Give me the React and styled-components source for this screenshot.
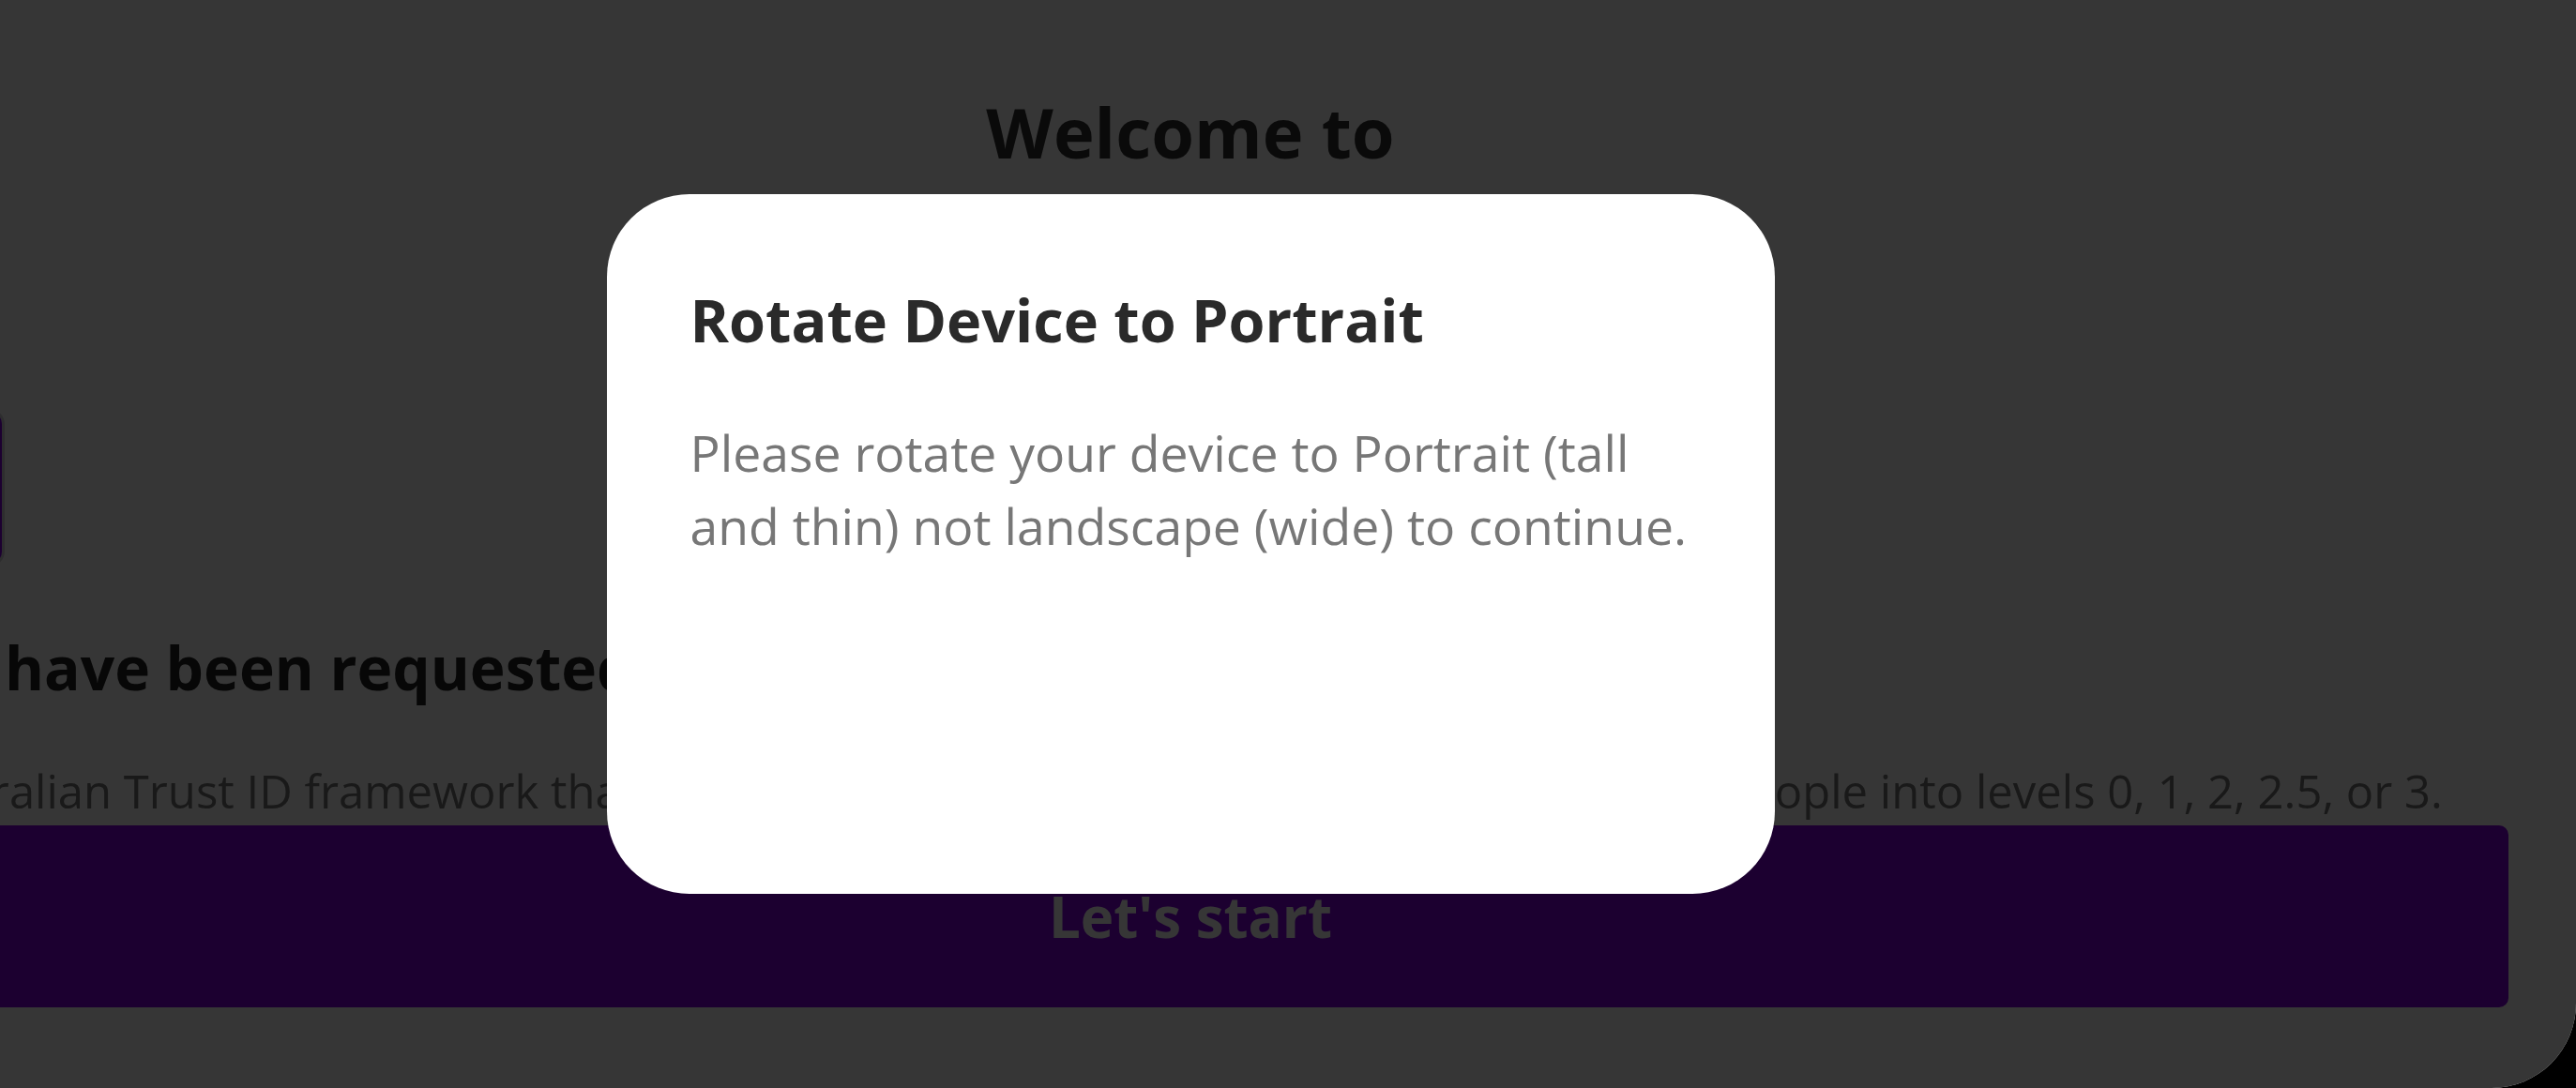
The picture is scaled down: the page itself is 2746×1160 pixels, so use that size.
import styled, { createGlobalStyle } from 'styled-components';

const GlobalStyle = createGlobalStyle`
  html, body {
    margin: 0;
    padding: 0;
    background: #000;
    font-family: "Open Sans", "Noto Sans", sans-serif;
  }
`;

const Frame = styled.div`
  position: relative;
  width: 2746px;
  height: 1160px;
  overflow: hidden;
  background: #fff;
  border-bottom-right-radius: 90px;
`;

const Page = styled.main`
  display: flex;
  flex-direction: column;
  width: 2810px;
  margin-left: -136px;
  padding-top: 97px;
  box-sizing: border-box;
`;

const Welcome = styled.h1`
  margin: 0;
  text-align: center;
  font-size: 74px;
  line-height: 1.2;
  font-weight: 700;
  color: #333;
`;

const ProviderRow = styled.div`
  display: flex;
  gap: 40px;
  margin-top: 250px;
`;

const ProviderCard = styled.div`
  width: 141px;
  height: 168px;
  box-sizing: border-box;
  border-radius: 16px;
  background: #8500e4;
  border: 3px solid #d6d3da;
`;

const TextBlock = styled.section`
  padding: 0 24px;
`;

const RequestTitle = styled.h2`
  margin: 70px 0 0;
  font-size: 64px;
  line-height: 1.2;
  font-weight: 700;
  color: #222;
  white-space: nowrap;
`;

const Intro = styled.p`
  margin: 58px 0 0;
  font-size: 49px;
  line-height: 1.4;
  color: #777;
  white-space: nowrap;
`;

const StartButton = styled.button`
  display: flex;
  align-items: center;
  justify-content: center;
  height: 194px;
  margin-top: 3px;
  border: none;
  border-radius: 10px;
  background: #8500e4;
  color: #fff;
  font-family: inherit;
  font-size: 60px;
  font-weight: 700;
`;

const Overlay = styled.div`
  position: absolute;
  inset: 0;
  display: flex;
  align-items: center;
  justify-content: center;
  padding-right: 208px;
  background: rgba(0, 0, 0, 0.79);
`;

const Dialog = styled.div`
  width: 1245px;
  height: 746px;
  box-sizing: border-box;
  padding: 93px 70px 0 89px;
  border-radius: 88px;
  background: #fff;
`;

const DialogTitle = styled.h3`
  margin: 0;
  font-size: 63px;
  line-height: 1.3;
  font-weight: 700;
  color: #2a2a2a;
`;

const DialogText = styled.p`
  margin: 62px 0 0;
  font-size: 53.5px;
  line-height: 78px;
  color: #777;
`;

export default function App() {
  return (
    <>
      <GlobalStyle />
      <Frame>
        <Page>
          <Welcome>Welcome to</Welcome>
          <ProviderRow>
            <ProviderCard />
          </ProviderRow>
          <TextBlock>
            <RequestTitle>IDs have been requested</RequestTitle>
            <Intro>
              Australian Trust ID framework that checks how sure we are of your identity and sorts people into levels 0, 1, 2, 2.5, or 3.
            </Intro>
          </TextBlock>
          <StartButton>Let's start</StartButton>
        </Page>
        <Overlay>
          <Dialog>
            <DialogTitle>Rotate Device to Portrait</DialogTitle>
            <DialogText>
              Please rotate your device to Portrait (tall and thin) not landscape (wide) to continue.
            </DialogText>
          </Dialog>
        </Overlay>
      </Frame>
    </>
  );
}
